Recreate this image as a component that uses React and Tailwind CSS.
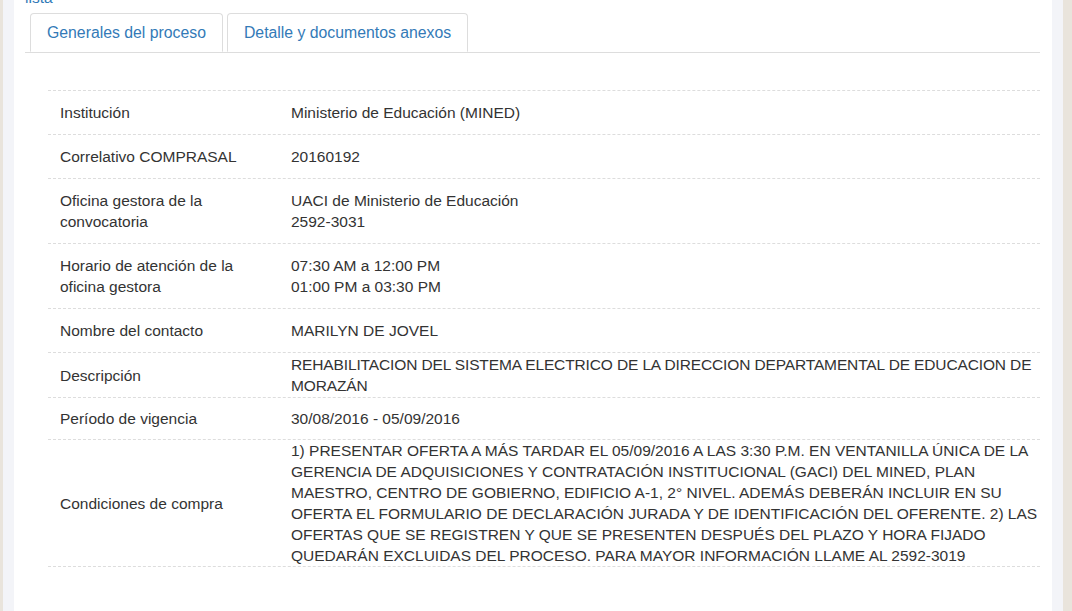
import React from 'react';

const rows = [
    { label: 'Institución', value: ['Ministerio de Educación (MINED)'] },
    { label: 'Correlativo COMPRASAL', value: ['20160192'] },
    { label: 'Oficina gestora de la convocatoria', value: ['UACI de Ministerio de Educación', '2592-3031'] },
    { label: 'Horario de atención de la oficina gestora', value: ['07:30 AM a 12:00 PM', '01:00 PM a 03:30 PM'] },
    { label: 'Nombre del contacto', value: ['MARILYN DE JOVEL'] },
    {
        label: 'Descripción',
        value: ['REHABILITACION DEL SISTEMA ELECTRICO DE LA DIRECCION DEPARTAMENTAL DE EDUCACION DE MORAZÁN'],
        pad: 'py-[1px] tracking-[-0.13px]',
    },
    { label: 'Período de vigencia', value: ['30/08/2016 - 05/09/2016'], pad: 'py-[10px]', labelPad: 'py-[10px]' },
    {
        label: 'Condiciones de compra',
        value: [
            '1) PRESENTAR OFERTA A MÁS TARDAR EL 05/09/2016 A LAS 3:30 P.M. EN VENTANILLA ÚNICA DE LA GERENCIA DE ADQUISICIONES Y CONTRATACIÓN INSTITUCIONAL (GACI) DEL MINED, PLAN MAESTRO, CENTRO DE GOBIERNO, EDIFICIO A-1, 2° NIVEL. ADEMÁS DEBERÁN INCLUIR EN SU OFERTA EL FORMULARIO DE DECLARACIÓN JURADA Y DE IDENTIFICACIÓN DEL OFERENTE. 2) LAS OFERTAS QUE SE REGISTREN Y QUE SE PRESENTEN DESPUÉS DEL PLAZO Y HORA FIJADO QUEDARÁN EXCLUIDAS DEL PROCESO. PARA MAYOR INFORMACIÓN LLAME AL 2592-3019',
        ],
        pad: 'py-0',
    },
];

const App = () => {
    return (
        <div className="h-[611px] w-[1072px] overflow-hidden bg-[#e9e4dc] pl-[3px] pr-[9px] font-['Liberation_Sans',Arial,sans-serif] text-[15.5px] leading-[21px] text-[#333]">
            <div className="flow-root h-full bg-[#f3f4f8] px-[11px]">
                <div className="flow-root h-full bg-white pl-[11px] pr-[12px]">
                    <a href="#" className="-mt-[13px] block h-[21px] text-[#337ab7]">lista</a>

                    {/* tabs */}
                    <ul className="mt-[5px] flex border-b border-[#ddd] pl-[5px] text-[15.8px]">
                        <li className="-mb-px mr-[4px]">
                            <a
                                href="#"
                                className="block rounded-t-[4px] border border-[#ddd] border-b-white bg-white px-[16px] py-[8px] text-[#337ab7]"
                            >
                                Generales del proceso
                            </a>
                        </li>
                        <li>
                            <a
                                href="#"
                                className="block rounded-t-[4px] border border-[#ddd] border-b-transparent px-[16px] py-[8px] text-[#337ab7]"
                            >
                                Detalle y documentos anexos
                            </a>
                        </li>
                    </ul>

                    {/* datos generales */}
                    <div className="ml-[23px] mt-[37px] border-b border-dashed border-[#ddd]">
                        {rows.map((row, i) => (
                            <div key={i} className="flex items-center border-t border-dashed border-[#ddd]">
                                <div className={`w-[231px] shrink-0 px-[12px] ${row.labelPad || 'py-[11px]'}`}>{row.label}</div>
                                <div className={`flex-1 pl-[12px] ${row.pad || 'py-[11px]'}`}>
                                    {row.value.map((line, j) => (
                                        <div key={j}>{line}</div>
                                    ))}
                                </div>
                            </div>
                        ))}
                    </div>
                </div>
            </div>
        </div>
    );
};

export default App;
